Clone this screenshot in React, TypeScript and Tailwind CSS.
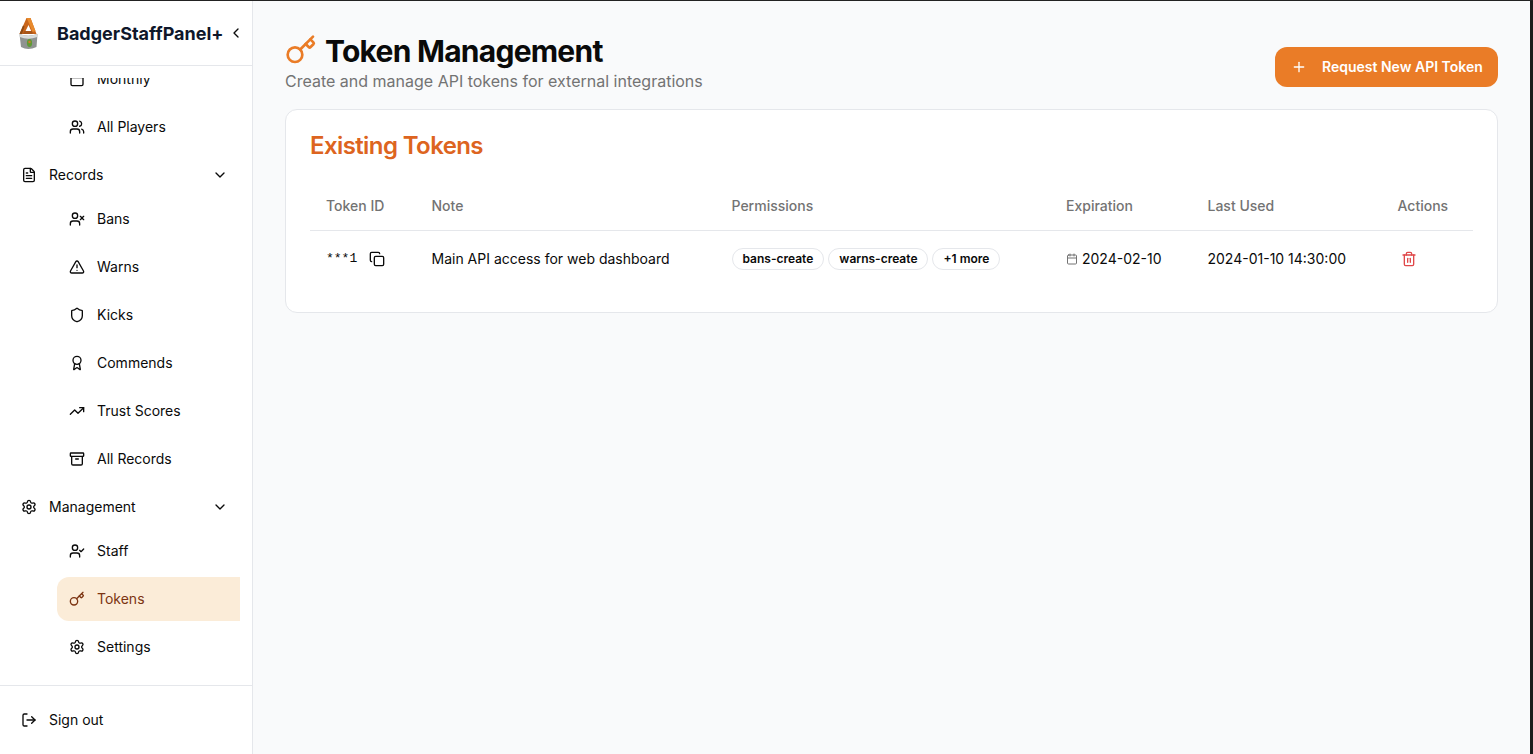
import React from "react";
import {
  Calendar, Users, FileText, ChevronDown, ChevronLeft, UserX, TriangleAlert, Shield, Award,
  TrendingUp, Archive, Settings, UserCheck, Key, LogOut, Plus, Copy, Trash2,
} from "lucide-react";

function Logo() {
  return (
    <svg width="20" height="33" viewBox="0 0 20 33" className="shrink-0">
      <path d="M1.5 17 L8.5 1 L12.5 1 L18.5 17 L14.5 17 L10.5 8 L6 17 Z" fill="#c9651a" />
      <path d="M8.5 1 L12.5 1 L17.5 14 L14.5 15 L10 4 Z" fill="#e88a2c" />
      <path d="M1.5 17 L5 8.5 L6.5 9.5 L4 17 Z" fill="#8f4a12" />
      <path d="M6 14 L14 14 L15 17 L5 17 Z" fill="#a8561a" />
      <path d="M1.5 17 Q10 20.5 19.5 17 L18.5 30 Q10 34 3 30 Z" fill="#8f9391" />
      <path d="M1.5 17 Q10 20.5 19.5 17 L19.3 20 Q10 23.5 1.8 20 Z" fill="#d9dcda" />
      <ellipse cx="11.5" cy="26" rx="2.6" ry="4" fill="#5f9a35" />
      <circle cx="11.5" cy="25" r="1.2" fill="#d8772a" />
    </svg>
  );
}

function SubItem({ icon: Icon, label, active }: { icon: any; label: string; active?: boolean }) {
  return (
    <div className={"h-11 ml-[57px] mr-3 pl-3 rounded-l-xl flex items-center gap-3 text-sm " + (active ? "bg-[#fbecd8] text-[#7c3412]" : "text-[#0a0a0a]")}>
      <Icon size={16} strokeWidth={2} className="shrink-0" />
      <span>{label}</span>
    </div>
  );
}

function GroupItem({ icon: Icon, label }: { icon: any; label: string }) {
  return (
    <div className="h-11 ml-[21px] mr-6 flex items-center gap-3 text-sm text-[#0a0a0a]">
      <Icon size={16} strokeWidth={2} className="shrink-0" />
      <span className="flex-1">{label}</span>
      <ChevronDown size={16} strokeWidth={2} className="shrink-0" />
    </div>
  );
}

function Badge({ children }: { children: React.ReactNode }) {
  return (
    <span className="h-[22px] px-[10px] rounded-full border border-[#e5e7eb] bg-white flex items-center text-xs font-semibold text-[#0a0a0a]">
      {children}
    </span>
  );
}

const th = "h-12 px-4 text-left align-middle text-sm font-medium text-[#737373]";
const td = "h-14 px-4 pt-[2px] align-middle text-sm text-[#0a0a0a]";

export default function App() {
  return (
    <div className="h-[754px] w-[1533px] overflow-hidden flex flex-col bg-[#1c1c1c] font-['Inter',sans-serif]">
      <div className="h-px shrink-0 bg-[#222222]" />
      <div className="flex-1 min-h-0 flex">
        <aside className="w-[253px] shrink-0 flex flex-col bg-white border-r border-[#e5e7eb]">
          <div className="h-[65px] shrink-0 border-b border-[#e5e7eb] flex items-center pl-[18px] pr-[8px]">
            <Logo />
            <span className="ml-[19px] pt-[1px] flex-1 text-lg font-bold text-[#0f172a] whitespace-nowrap">BadgerStaffPanel+</span>
            <ChevronLeft size={16} strokeWidth={2} className="text-[#0a0a0a] shrink-0" />
          </div>
          <nav className="mt-[12px] flex-1 min-h-0 overflow-hidden flex flex-col gap-1">
            <div className="-mt-[21px] flex flex-col gap-1">
              <SubItem icon={Calendar} label="Monthly" />
              <SubItem icon={Users} label="All Players" />
            </div>
            <div>
              <GroupItem icon={FileText} label="Records" />
              <div className="flex flex-col gap-1">
                <SubItem icon={UserX} label="Bans" />
                <SubItem icon={TriangleAlert} label="Warns" />
                <SubItem icon={Shield} label="Kicks" />
                <SubItem icon={Award} label="Commends" />
                <SubItem icon={TrendingUp} label="Trust Scores" />
                <SubItem icon={Archive} label="All Records" />
              </div>
            </div>
            <div>
              <GroupItem icon={Settings} label="Management" />
              <div className="flex flex-col gap-1">
                <SubItem icon={UserCheck} label="Staff" />
                <SubItem icon={Key} label="Tokens" active />
                <SubItem icon={Settings} label="Settings" />
              </div>
            </div>
          </nav>
          <div className="h-[69px] shrink-0 border-t border-[#e5e7eb] flex items-center pl-[21px] gap-3 text-sm text-[#0a0a0a]">
            <LogOut size={16} strokeWidth={2} />
            <span>Sign out</span>
          </div>
        </aside>
        <main className="w-[1277px] shrink-0 bg-[#f9fafb] px-8">
          <div className="h-[108px] flex justify-between">
            <div className="pt-[32px]">
              <div className="flex items-center gap-2 h-9">
                <Key size={32} strokeWidth={2} className="text-[#ea7c27] shrink-0 -mt-[2px]" />
                <h1 className="text-3xl font-bold tracking-tight text-[#0a0a0a]">Token Management</h1>
              </div>
              <p className="text-base text-[#737373]">Create and manage API tokens for external integrations</p>
            </div>
            <div className="pt-[46px]">
              <button className="h-10 w-[223px] rounded-xl bg-[#ea7c27] text-white text-sm font-semibold flex items-center pl-4 gap-[15px]">
                <Plus size={16} strokeWidth={2} />
                Request New API Token
              </button>
            </div>
          </div>
          <section className="h-[204px] rounded-xl border border-[#e5e7eb] bg-white px-6 pt-6">
            <h2 className="text-2xl font-semibold tracking-tight text-[#dd6420] leading-6">Existing Tokens</h2>
            <table className="mt-6 w-[1163px] table-fixed border-collapse">
              <colgroup>
                <col className="w-[105.5px]" />
                <col className="w-[300px]" />
                <col className="w-[334.5px]" />
                <col className="w-[141.5px]" />
                <col className="w-[190px]" />
                <col className="w-[91.5px]" />
              </colgroup>
              <thead>
                <tr className="border-b border-[#e5e7eb]">
                  <th className={th}>Token ID</th>
                  <th className={th}>Note</th>
                  <th className={th}>Permissions</th>
                  <th className={th}>Expiration</th>
                  <th className={th}>Last Used</th>
                  <th className={th}>Actions</th>
                </tr>
              </thead>
              <tbody>
                <tr>
                  <td className={td}>
                    <div className="flex items-center gap-3">
                      <span className="font-['Liberation_Mono',monospace] text-[13px]">***1</span>
                      <Copy size={16} strokeWidth={2} />
                    </div>
                  </td>
                  <td className={td}>Main API access for web dashboard</td>
                  <td className={td}>
                    <div className="flex items-center gap-1">
                      <Badge>bans-create</Badge>
                      <Badge>warns-create</Badge>
                      <Badge>+1 more</Badge>
                    </div>
                  </td>
                  <td className={td}>
                    <div className="flex items-center gap-1">
                      <Calendar size={12} strokeWidth={2} className="text-[#737373]" />
                      <span>2024-02-10</span>
                    </div>
                  </td>
                  <td className={td}>2024-01-10 14:30:00</td>
                  <td className={td}>
                    <Trash2 size={16} strokeWidth={2} className="ml-[3px] text-[#e0484a]" />
                  </td>
                </tr>
              </tbody>
            </table>
          </section>
        </main>
        <div className="flex-1 bg-[#1c1c1c]" />
      </div>
    </div>
  );
}
